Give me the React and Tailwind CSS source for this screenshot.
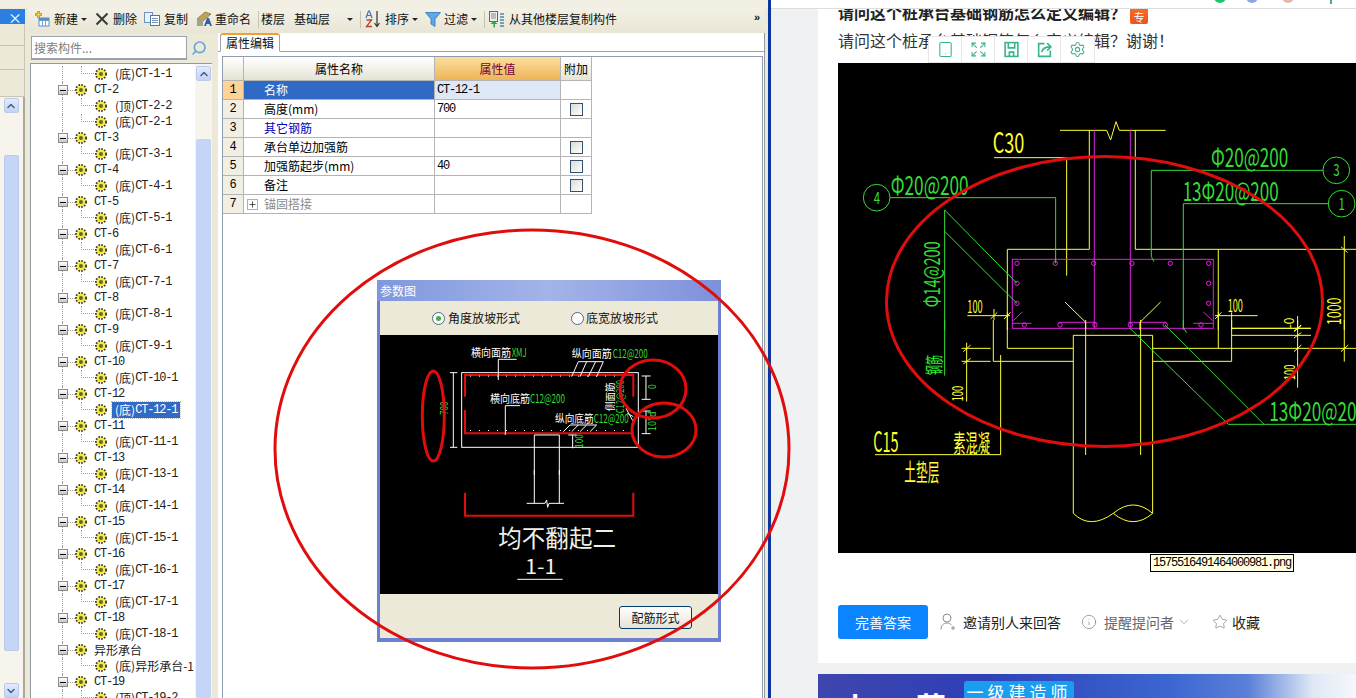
import { Expand, Settings, Tablet, Search, ChevronDown, ChevronUp, Star, Info, Plus } from "lucide-react";

const CJK = "Noto Sans CJK SC, sans-serif";
const Y = "#ffff33";
const G = "#35dc35";
const M = "#e020e0";
const W = "#ffffff";
const R = "#e00d0d";

const treeData = [
  ["child", "(底)", "CT-1-1"],
  ["parent", "", "CT-2"],
  ["child", "(顶)", "CT-2-2"],
  ["child", "(底)", "CT-2-1"],
  ["parent", "", "CT-3"],
  ["child", "(底)", "CT-3-1"],
  ["parent", "", "CT-4"],
  ["child", "(底)", "CT-4-1"],
  ["parent", "", "CT-5"],
  ["child", "(底)", "CT-5-1"],
  ["parent", "", "CT-6"],
  ["child", "(底)", "CT-6-1"],
  ["parent", "", "CT-7"],
  ["child", "(底)", "CT-7-1"],
  ["parent", "", "CT-8"],
  ["child", "(底)", "CT-8-1"],
  ["parent", "", "CT-9"],
  ["child", "(底)", "CT-9-1"],
  ["parent", "", "CT-10"],
  ["child", "(底)", "CT-10-1"],
  ["parent", "", "CT-12"],
  ["child", "(底)", "CT-12-1", true],
  ["parent", "", "CT-11"],
  ["child", "(底)", "CT-11-1"],
  ["parent", "", "CT-13"],
  ["child", "(底)", "CT-13-1"],
  ["parent", "", "CT-14"],
  ["child", "(底)", "CT-14-1"],
  ["parent", "", "CT-15"],
  ["child", "(底)", "CT-15-1"],
  ["parent", "", "CT-16"],
  ["child", "(底)", "CT-16-1"],
  ["parent", "", "CT-17"],
  ["child", "(底)", "CT-17-1"],
  ["parent", "", "CT-18"],
  ["child", "(底)", "CT-18-1"],
  ["parent", "", "异形承台"],
  ["child", "(底)", "异形承台-1"],
  ["parent", "", "CT-19"],
  ["child", "(顶)", "CT-19-2"],
];

const gridRows = [
  { no: 1, name: "名称", value: "CT-12-1", active: true },
  { no: 2, name: "高度(mm)", value: "700", check: true },
  { no: 3, name: "其它钢筋", blue: true },
  { no: 4, name: "承台单边加强筋", check: true },
  { no: 5, name: "加强筋起步(mm)", value: "40", check: true },
  { no: 6, name: "备注", check: true },
  { no: 7, name: "锚固搭接", plus: true },
];

function Gear() {
  return (
    <svg width="12" height="12" viewBox="0 0 12 12" className="shrink-0">
      <circle cx="6" cy="6" r="5" fill="none" stroke="#45440c" strokeWidth="2" strokeDasharray="1.7 1.2" />
      <circle cx="6" cy="6" r="4" fill="#f6ea35" />
      <circle cx="6" cy="6" r="2" fill="#6a6818" />
    </svg>
  );
}

function TreeLabel({ prefix, label }) {
  const isLatin = /^[A-Z]/.test(label);
  return (
    <span className="flex items-center whitespace-nowrap text-[12px] leading-4">
      {prefix && <span className="font-['Noto_Sans_CJK_SC',sans-serif]">{prefix}</span>}
      <span className={isLatin ? "font-['Liberation_Mono',monospace] tracking-[-1.2px]" : "font-['Noto_Sans_CJK_SC',sans-serif]"}>
        {label}
      </span>
    </span>
  );
}

function TreeRow({ kind, prefix, label, selected }) {
  if (kind === "parent") {
    return (
      <div className="relative flex h-4 items-center pl-[27px]">
        <span className="absolute left-[31px] top-0 h-4 border-l border-dotted border-[#a0a0a0]" />
        <span className="relative z-10 flex h-[10px] w-[10px] items-center justify-center border border-[#8a8a8a] bg-[linear-gradient(#ffffff,#c8c8c8)]">
          <span className="h-px w-[6px] bg-black" />
        </span>
        <span className="w-[7px] border-t border-dotted border-[#a0a0a0]" />
        <Gear />
        <span className="ml-[7px] text-[#222]">
          <TreeLabel prefix={prefix} label={label} />
        </span>
      </div>
    );
  }
  return (
    <div className="relative flex h-4 items-center pl-[64px]">
      <span className="absolute left-[31px] top-0 h-4 border-l border-dotted border-[#a0a0a0]" />
      <span className="absolute left-[50px] top-0 h-2 w-[13px] border-b border-l border-dotted border-[#a0a0a0]" />
      <Gear />
      <span className={selected ? "ml-[5px] bg-[#316ac5] px-[3px] text-white outline-1 outline-dotted outline-[#c0c0c0]" : "ml-[8px] text-[#222]"}>
        <TreeLabel prefix={prefix} label={label} />
      </span>
    </div>
  );
}

function ScrollButton({ up }) {
  const Icon = up ? ChevronUp : ChevronDown;
  return (
    <div className="flex h-[15px] w-[15px] items-center justify-center rounded-[2px] border border-[#b9cbe8] bg-[linear-gradient(#e1eafe,#c3d3f5)]">
      <Icon size={12} strokeWidth={3.2} className="text-[#4d6185]" />
    </div>
  );
}

function LeftStrip() {
  return (
    <div className="flex w-[28px] shrink-0 flex-col">
      <div className="h-px w-[25px]" />
      <div className="flex h-[15px] w-[25px] items-center justify-end bg-[#2b7fe3] pr-[3px]">
        <span className="text-[14px] leading-none text-white">×</span>
      </div>
      <div className="h-[22px] w-[25px] border-b border-r border-[#c9c5b2] bg-[#ece9d8]" />
      <div className="h-[24px] w-[25px] border-b border-r border-[#c9c5b2] bg-[#ece9d8]" />
      <div className="h-[27px] w-[25px] border-b border-r border-[#c9c5b2] bg-[#ece9d8]" />
      <div className="flex w-[25px] flex-1 flex-col items-center border-r-2 border-[#aca899] bg-[#f6f4ec] pl-[2px] pr-[3px] pt-[1px]">
        <ScrollButton up />
        <div className="mt-[42px] h-[496px] w-[15px] rounded-[2px] border border-[#b9cbe8] bg-[#c4d5f7]" />
        <div className="flex-1" />
        <ScrollButton />
      </div>
    </div>
  );
}

function Caret() {
  return <span className="mx-[3px] h-0 w-0 border-x-[3px] border-t-[3px] border-x-transparent border-t-[#222]" />;
}

function Sep({ className }) {
  return <span className={`h-[17px] w-px bg-[#c5c2b0] ${className}`} />;
}

function NewIcon() {
  return (
    <svg width="16" height="16" viewBox="0 0 16 16" className="shrink-0">
      <rect x="5" y="7" width="10" height="8" fill="#fff" stroke="#5b8fc4" />
      <path d="M5 9.5h10M8.5 9.5v5.5M11.5 9.5v5.5" stroke="#7da7d3" />
      <rect x="5" y="7" width="10" height="2.5" fill="#5b8fc4" />
      <path d="M3.5 0.5h2v2h2v2h-2v2h-2v-2h-2v-2h2z" fill="#f5d04a" stroke="#a78a25" strokeWidth="0.8" />
    </svg>
  );
}

function DeleteIcon() {
  return (
    <svg width="14" height="14" viewBox="0 0 14 14" className="shrink-0">
      <path d="M1.5 1.5l11 11M12.5 1.5l-11 11" stroke="#3a3a3a" strokeWidth="2" />
    </svg>
  );
}

function CopyIcon() {
  return (
    <svg width="16" height="14" viewBox="0 0 16 14" className="shrink-0">
      <rect x="0.5" y="0.5" width="8" height="10" fill="#eaf2fb" stroke="#6d92bd" />
      <rect x="6.5" y="3.5" width="9" height="10" fill="#fff" stroke="#4f78a8" />
      <path d="M8 6.5h6M8 8.5h6M8 10.5h6" stroke="#6d92bd" />
    </svg>
  );
}

function RenameIcon() {
  return (
    <svg width="16" height="18" viewBox="0 0 16 18" className="shrink-0">
      <path d="M1 9L9 2l6 2-8 7z" fill="#c0a25a" stroke="#7d6a30" strokeWidth="0.7" />
      <path d="M1 9h6v7H1z" fill="#9fa58a" />
      <path d="M8 16l3-8h2l3 8h-2l-.6-2h-2.8l-.6 2z" fill="#2f5fb0" />
    </svg>
  );
}

function SortIcon() {
  return (
    <svg width="16" height="18" viewBox="0 0 16 18" className="shrink-0">
      <path d="M1 8l2.5-7h1L7 8M2 5.5h4" fill="none" stroke="#3f74c0" strokeWidth="1.2" />
      <path d="M1.5 10h5l-5 6.5h5.5" fill="none" stroke="#b8402e" strokeWidth="1.3" />
      <path d="M12 1v15M9.5 13l2.5 3.5 2.5-3.5" fill="none" stroke="#333" strokeWidth="1.2" />
    </svg>
  );
}

function FilterIcon() {
  return (
    <svg width="16" height="15" viewBox="0 0 16 15" className="shrink-0">
      <path d="M0.5 0.5h15L10 7v7.5L6 12V7z" fill="#5fa7e6" stroke="#2e74b8" strokeWidth="0.8" />
    </svg>
  );
}

function FloorCopyIcon() {
  return (
    <svg width="16" height="17" viewBox="0 0 16 17" className="shrink-0">
      <rect x="0.5" y="0.5" width="8" height="10" fill="#eee" stroke="#666" />
      <path d="M2 3h5M2 5h5M2 7h5" stroke="#888" />
      <path d="M4.5 16.5V13H1.5L5 9.5 8.5 13H6v3.5z" fill="#2ea84a" />
      <path d="M11 3h4M11 6h4M11 9h4M11 12h4M11 15h4" stroke="#4f86b8" strokeWidth="1.5" />
    </svg>
  );
}

function Toolbar() {
  return (
    <div className="flex h-[25px] items-center bg-[linear-gradient(#f3f1e6,#e8e5d5)] pb-[3px] pl-[6px] text-[12px] text-[#111]">
      <NewIcon />
      <span className="ml-[4px]">新建</span>
      <Caret />
      <span className="ml-[5px]"><DeleteIcon /></span>
      <span className="ml-[4px]">删除</span>
      <span className="ml-[7px]"><CopyIcon /></span>
      <span className="ml-[4px]">复制</span>
      <span className="ml-[8px]"><RenameIcon /></span>
      <span className="ml-[3px]">重命名</span>
      <Sep className="ml-[7px]" />
      <span className="ml-[2px]">楼层</span>
      <span className="ml-[9px] w-[50px]">基础层</span>
      <Caret />
      <Sep className="ml-[4px]" />
      <span className="ml-[4px]"><SortIcon /></span>
      <span className="ml-[4px]">排序</span>
      <Caret />
      <span className="ml-[4px]"><FilterIcon /></span>
      <span className="ml-[3px]">过滤</span>
      <Caret />
      <Sep className="ml-[4px]" />
      <span className="ml-[4px]"><FloorCopyIcon /></span>
      <span className="ml-[4px]">从其他楼层复制构件</span>
      <span className="ml-auto mr-[5px] -translate-y-[2px] font-['Liberation_Sans',sans-serif] text-[11px] font-bold leading-none">»</span>
    </div>
  );
}

function TreePanel() {
  return (
    <div className="ml-[2px] flex w-[182px] shrink-0 flex-col">
      <div className="flex h-[30px] items-center">
        <div className="ml-px flex h-[24px] w-[156px] items-center border border-b-2 border-[#9aa3ad] bg-white pl-[2px] text-[12px] text-[#808080]">
          搜索构件...
        </div>
        <Search size={16} strokeWidth={2.5} className="ml-[4px] -scale-x-100 text-[#6aa4dc]" />
      </div>
      <div className="flex min-h-0 flex-1 border-l border-t border-[#8f9aa5] bg-white">
        <div className="w-[164px] overflow-hidden pt-[2px]">
          {treeData.map(([kind, prefix, label, selected]) => (
            <TreeRow key={label} kind={kind} prefix={prefix} label={label} selected={selected} />
          ))}
        </div>
        <div className="flex w-[17px] flex-col items-center bg-[#f6f4ec] pt-[2px]">
          <ScrollButton up />
          <div className="mx-px mt-[58px] flex-1 self-stretch rounded-[2px] bg-[#c4d5f7]" />
        </div>
      </div>
    </div>
  );
}

function PropertyGrid() {
  const cell = "flex items-center border-b border-r border-[#b4b4b4] text-[12px] leading-none";
  return (
    <div className="grid w-[369px] grid-cols-[21px_191px_126px_31px] grid-rows-[24px_repeat(7,19px)]">
      <div className={`${cell} bg-[linear-gradient(#fff,#e6e3d4)]`} />
      <div className={`${cell} justify-center bg-[linear-gradient(#fff,#e6e3d4)]`}>属性名称</div>
      <div className={`${cell} justify-center bg-[linear-gradient(#fbdf9f,#edb557)] text-[#7a0038]`}>属性值</div>
      <div className={`${cell} justify-center bg-[linear-gradient(#fff,#e6e3d4)]`}>附加</div>
      {gridRows.map((row) => (
        <div key={row.no} className="contents">
          <div className={`${cell} justify-center font-['Liberation_Mono',monospace] ${row.active ? "bg-[#ffd398]" : "bg-[#f1efe4]"}`}>{row.no}</div>
          <div className={`${cell} ${row.plus ? "pl-[3px]" : "pl-[20px]"} ${row.active ? "bg-[#316ac5] text-white" : ""} ${row.blue ? "text-[#0000c0]" : ""} ${row.plus ? "text-[#8a8a8a]" : ""}`}>
            {row.plus && (
              <span className="mr-[6px] flex h-[11px] w-[11px] items-center justify-center border border-[#b0b0b0] text-[#222]">
                <Plus size={9} strokeWidth={2} />
              </span>
            )}
            {row.name}
          </div>
          <div className={`${cell} pl-[2px] font-['Liberation_Mono',monospace] tracking-[-1.2px] ${row.active ? "bg-[#dde7f5]" : ""}`}>{row.value}</div>
          <div className={`${cell} justify-center`}>
            {row.check && <span className="h-[13px] w-[13px] border border-[#33506e] bg-[linear-gradient(135deg,#dcdcd4,#ffffff)]" />}
          </div>
        </div>
      ))}
    </div>
  );
}

function T({ x, y, w, size, fill, rot, children }) {
  return (
    <text
      x={x}
      y={y}
      fontSize={size}
      fill={fill}
      fontFamily={CJK}
      textLength={w}
      lengthAdjust="spacingAndGlyphs"
      transform={rot ? `rotate(-90 ${x} ${y})` : undefined}
    >
      {children}
    </text>
  );
}

function ParamDrawing() {
  const dots = [];
  for (let x = 300; x < 780; x += 27) dots.push(x);
  return (
    <svg viewBox="380 335 338 259" className="h-[259px] w-[338px] bg-black">
      <g transform="translate(370 275) scale(0.3333)" fill="none" strokeWidth="3">
        <rect x="275" y="293" width="530" height="224" stroke={W} />
        <path d="M285 365V300H790V365M285 405V475H790" stroke={R} strokeWidth="6" />
        {dots.map((x) => (
          <g key={x}>
            <rect x={x} y="302" width="3" height="3" fill={W} />
            <rect x={x} y="465" width="3" height="3" fill={W} />
          </g>
        ))}
        <path d="M250 293V517M240 293H262M240 517H262" stroke={W} />
        <path d="M385 315V253H440M406 480V392H450" stroke={W} />
        <path d="M605 305L625 260H700L680 305M630 305L650 260M655 305L677 260" stroke={W} />
        <path d="M580 470L600 450H680L660 470M605 470L625 450M630 470L650 450" stroke={W} />
        <path d="M828 303V373M815 303H842M815 373H842M828 408V476M815 408H842M815 476H842" stroke={W} />
        <path d="M768 400L790 440M772 415L790 425" stroke={W} />
        <path d="M493 600V480H568V600M608 480V520M595 480H620" stroke={W} />
        <T x="303" y="246" w="120" size="33" fill={W}>横向面筋</T>
        <T x="425" y="246" w="45" size="34" fill={G}>XMJ</T>
        <T x="605" y="248" w="120" size="33" fill={W}>纵向面筋</T>
        <T x="728" y="248" w="105" size="36" fill={G}>C12@200</T>
        <T x="360" y="384" w="120" size="33" fill={W}>横向底筋</T>
        <T x="480" y="384" w="105" size="36" fill={G}>C12@200</T>
        <T x="555" y="444" w="116" size="33" fill={W}>纵向底筋</T>
        <T x="671" y="444" w="105" size="36" fill={G}>C12@200</T>
        <T x="733" y="408" w="85" size="30" fill={W} rot>侧面筋</T>
        <T x="762" y="415" w="100" size="32" fill={G} rot>C12@200</T>
        <T x="234" y="420" w="40" size="32" fill={G} rot>700</T>
        <T x="858" y="342" w="14" size="32" fill={G} rot>0</T>
        <T x="858" y="468" w="58" size="32" fill={G} rot>10*d</T>
        <T x="638" y="518" w="40" size="32" fill={G} rot>100</T>
      </g>
      <g transform="translate(370 470) scale(0.3333)" fill="none" strokeWidth="3">
        <path d="M493 0V100M568 0V100M470 100H525L530 90L533 112L537 100H582" stroke={W} />
        <path d="M285 68V137H790V68" stroke={R} strokeWidth="6" />
        <T x="385" y="232" w="353" size="72" fill="#f0f0e8">均不翻起二</T>
        <T x="465" y="312" w="95" size="60" fill="#f0f0e8">1-1</T>
        <path d="M442 328H578" stroke={W} />
      </g>
    </svg>
  );
}

function ParamDialog() {
  return (
    <div className="absolute left-[159px] top-[247px] flex h-[362px] w-[344px] flex-col border-x-[3px] border-b-[4px] border-[#6d7fcf] bg-[#ece9d8]">
      <div className="-mx-[3px] flex h-[21px] items-center bg-[linear-gradient(90deg,#7f97dd,#a3b4e8_50%,#7f90dc)] pl-[3px] text-[12px] text-white">
        参数图
      </div>
      <div className="flex h-[34px] items-center bg-[#ece9d8] pl-[52px] text-[12px] text-[#111]">
        <span className="flex h-[13px] w-[13px] items-center justify-center rounded-full border border-[#4a6a88] bg-white">
          <span className="h-[5px] w-[5px] rounded-full bg-[#3eae4e]" />
        </span>
        <span className="ml-[3px]">角度放坡形式</span>
        <span className="ml-[51px] h-[13px] w-[13px] rounded-full border border-[#4a6a88] bg-white" />
        <span className="ml-[2px]">底宽放坡形式</span>
      </div>
      <ParamDrawing />
      <div className="flex flex-1 items-start justify-end pr-[26px] pt-[12px]">
        <div className="flex h-[23px] w-[73px] items-center justify-center rounded-[3px] border border-[#003c74] bg-[linear-gradient(#ffffff,#e6e3d6)] text-[12px] text-[#111]">
          配筋形式
        </div>
      </div>
    </div>
  );
}

function MainPanel() {
  return (
    <div className="relative flex w-[547px] shrink-0 flex-col border-r border-[#8f9aa5] bg-white">
      <div className="flex h-[19px] items-end border-b border-[#9aa3ad] pl-[2px]">
        <div className="relative -mb-px flex h-[19px] w-[60px] items-center justify-center rounded-t-[3px] border-x border-b border-t-2 border-x-[#9aa3ad] border-b-white border-t-[#f0a030] bg-white text-[12px] text-[#111]">
          属性编辑
        </div>
      </div>
      <div className="ml-[4px] mr-[1px] mt-[4px] flex-1 border-l border-r border-t border-[#8f9db0]">
        <PropertyGrid />
      </div>
      <ParamDialog />
    </div>
  );
}

function LeftApp() {
  return (
    <div className="flex w-[768px] shrink-0 flex-col bg-[#ece9d8]">
      <div className="h-2 bg-[#f1efe3]" />
      <div className="flex min-h-0 flex-1">
        <LeftStrip />
        <div className="flex min-w-0 flex-1 flex-col">
          <div className="flex">
            <div className="w-[737px]"><Toolbar /></div>
          </div>
          <div className="flex min-h-0 flex-1">
            <TreePanel />
            <div className="w-[6px] shrink-0 bg-[#ece9d8]" />
            <MainPanel />
          </div>
        </div>
      </div>
    </div>
  );
}

function CadDrawing() {
  const topBars = [531, 646, 761, 876, 991, 1106];
  const sideBars = [
    [531, 520],
    [531, 580],
    [1106, 520],
    [1106, 580],
  ];
  const bottomBars = [553, 660, 765, 871, 976, 1083];
  return (
    <svg viewBox="838 63 518 490" className="h-[490px] w-[518px] shrink-0 bg-black">
      <g transform="translate(840 110) scale(0.3333)" fill="none" strokeWidth="3">
        <path d="M660 61H800L812 90L828 35L838 61H977" stroke={Y} />
        <T x="458" y="130" w="95" size="84" fill={Y}>C30</T>
        <path d="M462 143H680V497" stroke={Y} />
        <path d="M748 61V418H502V660M886 61V418H1548M1135 418V660" stroke={Y} />
        <path d="M1513 378V660M1503 410L1523 428" stroke={Y} />
        <path d="M763 61V655M871 61V655" stroke={M} />
        <rect x="517" y="448" width="603" height="207" stroke={M} />
        {topBars.map((x) => <circle key={x} cx={x} cy="460" r="6.5" stroke={M} />)}
        {sideBars.map(([x, y]) => <circle key={`${x}-${y}`} cx={x} cy={y} r="6.5" stroke={M} />)}
        {bottomBars.map((x) => <circle key={x} cx={x} cy="645" r="6.5" stroke={M} />)}
        <path d="M517 640H575M655 637H770M865 637H980M1060 640H1120M520 632L547 606M1118 632L1090 606" stroke={M} />
        <path d="M675 576L737 637V660M962 576L900 637V660" stroke={Y} />
        <circle cx="110" cy="263" r="40" stroke={G} />
        <T x="101" y="281" w="19" size="50" fill={G}>4</T>
        <path d="M150 263H647V460" stroke={G} />
        <T x="152" y="254" w="234" size="78" fill={G}>Φ20@200</T>
        <circle cx="1489" cy="181" r="40" stroke={G} />
        <T x="1480" y="199" w="19" size="50" fill={G}>3</T>
        <path d="M1450 181H934V440L942 455" stroke={G} />
        <T x="1113" y="170" w="232" size="78" fill={G}>Φ20@200</T>
        <circle cx="1505" cy="281" r="40" stroke={G} />
        <T x="1496" y="299" w="19" size="50" fill={G}>1</T>
        <path d="M1465 281H1030V660" stroke={G} />
        <T x="1028" y="272" w="288" size="78" fill={G}>13Φ20@200</T>
        <path d="M314 660V300L531 520M314 364L531 580" stroke={G} />
        <T x="300" y="592" w="198" size="66" fill={G} rot>Φ14@200</T>
        <T x="382" y="608" w="46" size="54" fill={Y}>100</T>
        <path d="M382 617H510M462 597V630M452 627L472 607M502 607V630M492 627L512 607" stroke={Y} />
        <T x="1163" y="607" w="46" size="54" fill={Y}>100</T>
        <path d="M1125 617H1253M1135 607V630M1125 627L1145 607M1175 607V660" stroke={Y} />
        <path d="M1175 655H1413M1373 618V660M1363 665L1383 645" stroke={Y} />
        <T x="1362" y="655" w="32" size="42" fill={Y} rot>-0</T>
        <T x="1502" y="645" w="82" size="56" fill={Y} rot>1000</T>
      </g>
      <g transform="translate(840 320) scale(0.3333)" fill="none" strokeWidth="3">
        <path d="M460 0V124H700M502 0V85H700M700 580V46H938V580" stroke={Y} />
        <path d="M737 0V405M902 0V405" stroke={Y} />
        <path d="M938 85H1548M938 124H1175V0M1135 0V85" stroke={Y} />
        <path d="M1175 25H1413M1175 46H1413M1373 0V203M1513 0V125" stroke={Y} />
        <path d="M1362 33L1384 17M1362 54L1384 38M1362 95L1384 75M1503 95L1525 75" stroke={Y} />
        <path d="M380 68V245M365 85H452M365 124H452M370 95L392 75M370 132L392 115" stroke={Y} />
        <T x="370" y="244" w="46" size="46" fill={Y} rot>100</T>
        <T x="1365" y="180" w="46" size="46" fill={Y} rot>100</T>
        <path d="M482 105V404H105" stroke={Y} />
        <T x="100" y="395" w="76" size="84" fill={Y}>C15</T>
        <T x="340" y="395" w="110" size="72" fill={Y}>素混凝</T>
        <T x="193" y="483" w="105" size="70" fill={Y}>土垫层</T>
        <path d="M700 580Q750 630 820 580Q880 530 938 580M820 580Q880 630 938 580" stroke={Y} />
        <path d="M314 0V167" stroke={G} />
        <T x="303" y="165" w="60" size="56" fill="#2cf02c" rot>钢筋</T>
        <path d="M870 25L1165 313M975 15L1272 313M1165 313H1548M1030 0V22L1040 38" stroke={G} />
        <T x="1288" y="303" w="262" size="78" fill={G}>13Φ20@20</T>
      </g>
      <ellipse cx="1104.5" cy="301.5" rx="218" ry="145" fill="none" stroke={R} strokeWidth="3" />
    </svg>
  );
}

function FloppyIcon({ size, strokeWidth }) {
  return (
    <svg width={size} height={size} viewBox="0 0 16 16" fill="none" stroke="currentColor" strokeWidth={strokeWidth}>
      <rect x="2" y="1.5" width="12" height="13" />
      <path d="M5 1.5v5h6v-5M6 14.5v-4h4v4" />
    </svg>
  );
}

function ShareIcon({ size, strokeWidth }) {
  return (
    <svg width={size} height={size} viewBox="0 0 16 16" fill="none" stroke="currentColor" strokeWidth={strokeWidth}>
      <path d="M8 2.5H2.5v12h11V9" />
      <path d="M5.5 10.500c.5-3.500 3-5 8-5M10.500 2l3.500 3.500-3.500 3.500" />
    </svg>
  );
}

function ImageToolbar() {
  const items = [Tablet, Expand, FloppyIcon, ShareIcon, Settings];
  return (
    <div className="absolute left-[110px] top-[27px] z-10 flex h-[27px] border border-[#e6e6e6] bg-white">
      {items.map((Icon, i) => (
        <span key={i} className="flex w-[33px] items-center justify-center border-r border-[#e6e6e6] text-[#36b48c] last:border-r-0">
          <Icon size={17} strokeWidth={1.5} />
        </span>
      ))}
    </div>
  );
}

function InviteIcon() {
  return (
    <svg width="16" height="18" viewBox="0 0 16 18" fill="none" stroke="#8a8f99" strokeWidth="1">
      <circle cx="7" cy="5" r="4" />
      <path d="M1 16.5c0-4 2.5-6.500 6-6.500 2 0 3.500.8 4.500 2.200M11 15h4M13 13v4" />
    </svg>
  );
}

function RightBrowser() {
  return (
    <div className="flex min-w-0 flex-1 flex-col border-l-[3px] border-[#0a35a0] bg-[#f0f1f3]">
      <div className="relative h-[9px] shrink-0 overflow-hidden border-b border-[#dddddd] bg-white">
        <span className="absolute left-[443px] top-[-9px] h-3 w-3 rounded-full bg-[#21c26b]" />
        <span className="absolute left-[475px] top-[-9px] h-3 w-3 rounded-full bg-[#8aa6e8]" />
        <span className="absolute left-[511px] top-[-9px] h-3 w-3 rounded-full bg-[#e8b8b0]" />
        <span className="absolute left-[559px] top-[-4px] h-2 w-[2px] bg-[#4aa890]" />
      </div>
      <div className="relative ml-[47px] flex h-[654px] shrink-0 flex-col overflow-hidden bg-white pl-[20px] font-['Noto_Sans_CJK_SC',sans-serif]">
        <div className="-mt-[9px] flex h-[24px] items-center">
          <span className="text-[16px] font-bold leading-none text-[#222]">{"请问这个桩承台基础钢筋怎么定义编辑\uFF1F"}</span>
          <span className="ml-[4px] flex h-[24px] w-[18px] items-center justify-center self-start rounded-[2px] bg-[linear-gradient(#f97a2a,#f0521e)] pt-[10px] text-[11px] text-white">专</span>
        </div>
        <div className="mt-[5px] text-[16px] leading-[22px] text-[#333]">{"请问这个桩承台基础钢筋怎么定义编辑\uFF1F谢谢\uFF01"}</div>
        <ImageToolbar />
        <div className="mt-[12px]"><CadDrawing /></div>
        <div className="mt-[52px] flex items-center text-[14px]">
          <span className="flex h-[34px] w-[90px] items-center justify-center rounded-[3px] bg-[#0a84ff] text-white">完善答案</span>
          <span className="ml-[12px]"><InviteIcon /></span>
          <span className="ml-[7px] text-[#222]">邀请别人来回答</span>
          <Info size={16} strokeWidth={1} className="ml-[20px] text-[#777]" />
          <span className="ml-[7px] text-[#666]">提醒提问者</span>
          <ChevronDown size={14} strokeWidth={1} className="ml-[3px] text-[#777]" />
          <Star size={16} strokeWidth={1} className="ml-[21px] text-[#777]" />
          <span className="ml-[4px] text-[#222]">收藏</span>
        </div>
        <div className="absolute left-[332px] top-[545px] flex h-[18px] w-[144px] items-center justify-center border border-black bg-[#ffffe1] font-['Liberation_Mono',monospace] text-[12px] tracking-[-1.2px] text-black">
          1575516491464000981.png
        </div>
      </div>
      <div className="relative ml-[47px] mt-[11px] flex-1 overflow-hidden bg-[linear-gradient(90deg,#3e46ae,#2f3fb6_30%,#3a66d0_65%,#5b80d8_80%,#dfe8f5_92%,#f5f7fb)] pl-[22px] pt-[17px] font-['Noto_Sans_CJK_SC',sans-serif]">
        <span className="text-[30px] font-bold leading-none tracking-[8px] text-white">小·荣</span>
        <div className="absolute left-[146px] top-[7px] h-[24px] w-[110px] rounded-t-[3px] bg-[#1a9df0] pt-[1px] text-center text-[17px] leading-[20px] tracking-[4px] text-white">
          一级建造师
        </div>
      </div>
    </div>
  );
}

function Annotations() {
  return (
    <svg viewBox="0 0 1356 698" className="pointer-events-none absolute inset-0 z-20 h-[698px] w-[1356px]" fill="none" stroke={R}>
      <ellipse cx="532" cy="449" rx="257" ry="219" strokeWidth="3" />
      <ellipse cx="433.3" cy="416" rx="11" ry="45" strokeWidth="3" />
      <ellipse cx="653" cy="389" rx="33" ry="29" strokeWidth="3" />
      <ellipse cx="664" cy="430" rx="32" ry="27" strokeWidth="3" />
    </svg>
  );
}

export default function App() {
  return (
    <div className="relative flex h-[698px] w-[1356px] overflow-hidden bg-white font-['Noto_Sans_CJK_SC',sans-serif]">
      <LeftApp />
      <RightBrowser />
      <Annotations />
    </div>
  );
}
